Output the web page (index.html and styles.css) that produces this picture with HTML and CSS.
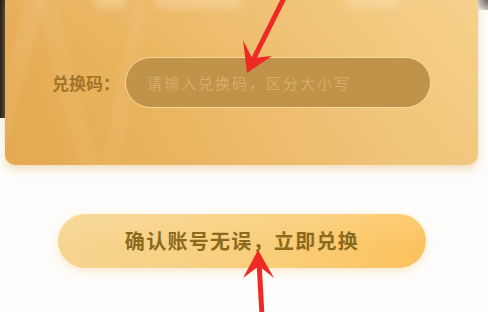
FILE: index.html
```html
<!DOCTYPE html>
<html lang="zh-CN">
<head>
<meta charset="utf-8">
<title>兑换码</title>
<link rel="stylesheet" href="styles.css">
</head>
<body>
<div class="page">
  <div class="top">
    <div class="edge"></div>
    <div class="card">
      <div class="stripes"></div>
      <div class="blob blob1"></div>
      <div class="blob blob2"></div>
      <div class="blob blob3"></div>
      <div class="row">
        <span class="label">兑换码：</span>
        <div class="input"><span class="placeholder">请输入兑换码，区分大小写</span></div>
      </div>
    </div>
    <div class="corner"></div>
  </div>
  <div class="btn">确认账号无误，立即兑换</div>
  <svg class="arrows" width="488" height="312" viewBox="0 0 488 312">
    <line x1="285" y1="-4" x2="250" y2="66" stroke="#ee2a24" stroke-width="5" stroke-linecap="round"/>
    <polygon points="247,73 243,40 252,58 272,56" fill="#ee2a24"/>
    <line x1="262" y1="316" x2="259" y2="262" stroke="#ee2a24" stroke-width="5" stroke-linecap="round"/>
    <polygon points="258,250 243,278 259,266 274,278" fill="#ee2a24"/>
  </svg>
</div>
</body>
</html>
```

FILE: styles.css
```css
* { box-sizing: border-box; }
html, body { margin: 0; padding: 0; }
body {
  background: #fefdfb;
  font-family: "Noto Sans CJK SC", "Noto Sans", sans-serif;
  width: 488px;
  height: 312px;
  overflow: hidden;
}
.page {
  position: relative;
  width: 488px;
  height: 312px;
  display: flex;
  flex-direction: column;
}
.top {
  display: flex;
  align-items: flex-start;
}
.edge {
  width: 5px;
  height: 118px;
  background: linear-gradient(90deg, #1e1a17, #4a3a2a);
  filter: blur(0.6px);
}
.corner {
  width: 10px;
  height: 10px;
  background: radial-gradient(circle at 100% 0, #6a6460 0, #b8b2ac 60%, transparent 100%);
}
.card {
  position: relative;
  overflow: hidden;
  width: 473px;
  height: 165px;
  border-radius: 0 0 10px 10px;
  background:
    linear-gradient(180deg, rgba(255,230,180,0.10) 0, rgba(255,230,180,0) 40%, rgba(215,150,60,0.10) 100%),
    linear-gradient(90deg, #e5ab53 0%, #eab560 30%, #efc071 60%, #f3c980 85%, #f5cd87 100%);
  box-shadow: 0 4px 10px rgba(214, 160, 70, 0.35);
}
.stripes {
  position: absolute;
  left: 0;
  top: 0;
  width: 200px;
  height: 165px;
  background:
    linear-gradient(105deg, transparent 8%, rgba(255,235,195,0.10) 9%, rgba(255,235,195,0.10) 16%, transparent 17%),
    linear-gradient(75deg, transparent 30%, rgba(255,235,195,0.08) 31%, rgba(255,235,195,0.08) 38%, transparent 39%),
    linear-gradient(100deg, transparent 55%, rgba(255,235,195,0.07) 56%, rgba(255,235,195,0.07) 62%, transparent 63%);
  filter: blur(2px);
}
.blob {
  position: absolute;
  top: -6px;
  height: 14px;
  border-radius: 7px;
  background: rgba(255, 236, 200, 0.35);
  filter: blur(4px);
}
.blob1 { left: 88px; width: 34px; }
.blob2 { left: 150px; width: 88px; }
.blob3 { left: 340px; width: 56px; }
.row {
  position: relative;
  display: flex;
  align-items: center;
  padding: 57px 0 0 47px;
}
.label {
  margin-right: 5px;
  font-size: 17px;
  font-weight: 700;
  color: #a2742a;
  white-space: nowrap;
}
.input {
  width: 306px;
  height: 51px;
  border-radius: 26px;
  border: 1.5px solid #f6d99c;
  background: #c1924a;
  display: flex;
  align-items: center;
  padding-left: 21px;
}
.placeholder {
  font-size: 15px;
  letter-spacing: 2px;
  color: #d6ad68;
  white-space: nowrap;
}
.btn {
  margin: 49px 0 0 58px;
  width: 368px;
  height: 54px;
  border-radius: 27px;
  background:
    linear-gradient(180deg, rgba(255,240,200,0.2), rgba(255,240,200,0) 60%),
    linear-gradient(90deg, #f6d590 0%, #f8cf7e 50%, #fcc35e 100%);
  box-shadow: 0 3px 10px rgba(246, 196, 110, 0.35);
  display: flex;
  align-items: center;
  justify-content: center;
  font-size: 20px;
  font-weight: 700;
  letter-spacing: 1.3px;
  color: #8b6a1e;
  padding-bottom: 1px;
}
.arrows {
  position: absolute;
  left: 0;
  top: 0;
}
```
